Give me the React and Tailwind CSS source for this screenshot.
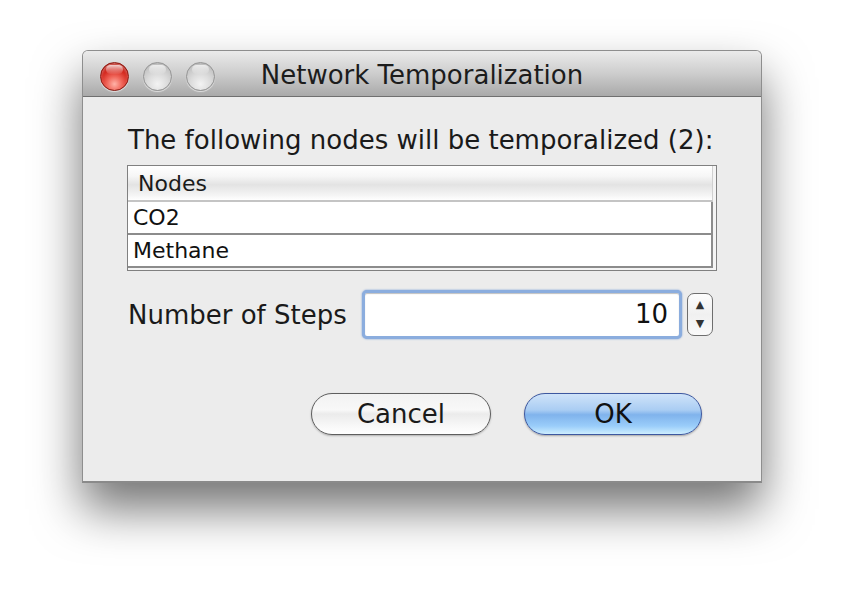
import React from "react";

const font = { fontFamily: '"DejaVu Sans", "Liberation Sans", sans-serif' };

function Light({ red }) {
  return (
    <div
      className={
        red
          ? "w-[29px] h-[29px] rounded-full border border-[#8c1a12] bg-[radial-gradient(circle_at_50%_78%,#ffb3a8_0%,#f0665a_30%,#d3261c_60%,#a01008_100%)] shadow-[inset_0_2px_3px_rgba(255,255,255,0.35),0_1px_1px_rgba(255,255,255,0.6)] flex justify-center"
          : "w-[29px] h-[29px] rounded-full border border-[#959595] bg-[radial-gradient(circle_at_50%_78%,#f3f3f3_0%,#dcdcdc_40%,#c3c3c3_75%,#a9a9a9_100%)] shadow-[0_1px_1px_rgba(255,255,255,0.6)] flex justify-center"
      }
    >
      <div
        className={
          red
            ? "mt-[2px] w-[17px] h-[9px] rounded-full bg-gradient-to-b from-[rgba(255,255,255,0.75)] to-[rgba(255,255,255,0.05)]"
            : "mt-[2px] w-[17px] h-[9px] rounded-full bg-gradient-to-b from-[rgba(255,255,255,0.7)] to-[rgba(255,255,255,0.05)]"
        }
      />
    </div>
  );
}

export default function App() {
  return (
    <div className="w-[843px] h-[597px] bg-white pt-[50px] pl-[82px]" style={font}>
      <div className="w-[680px] h-[433px] border border-[#8e8e8e] border-b-2 border-b-[#8a8a8a] rounded-t-[6px] bg-[#ececec] shadow-[0_26px_48px_rgba(0,0,0,0.55)] flex flex-col">
        {/* Title bar */}
        <div className="h-[46px] rounded-t-[5px] border-b border-[#6f6f6f] bg-gradient-to-b from-[#ebebeb] via-[#cdcdcd] to-[#a9a9a9] grid grid-cols-[1fr_auto_1fr] items-center">
          <div className="flex gap-[14px] pl-[17px] pt-[5px]">
            <Light red />
            <Light />
            <Light />
          </div>
          <div className="text-[26px] leading-[30px] text-[#1c1c1c] pt-[2px]">Network Temporalization</div>
          <div />
        </div>

        {/* Body */}
        <div className="flex flex-col pl-[44px] pr-[45px] pt-[28px]">
          <div className="text-[26px] leading-[30px] text-[#1a1a1a] pl-[1px]">
            The following nodes will be temporalized (2):
          </div>

          <div className="mt-[10px] w-[590px] h-[106px] border border-[#808080] bg-[#f4f4f4] flex flex-col pr-[3px] pb-[1px]">
            <div className="h-[36px] flex items-center pl-[10px] text-[22px] text-[#1a1a1a] border-b-2 border-[#c4c4c4] border-r border-r-[#d0d0d0] bg-[linear-gradient(to_bottom,#ffffff_0%,#f6f6f6_30%,#e3e3e3_55%,#f4f4f4_85%,#ffffff_100%)]">
              Nodes
            </div>
            <div className="h-[33px] flex items-center pl-[5px] text-[22px] text-[#111] bg-white border-b-2 border-r-2 border-[#8c8c8c]">
              CO2
            </div>
            <div className="h-[33px] flex items-center pl-[5px] text-[22px] text-[#111] bg-white border-b-2 border-r-2 border-[#8c8c8c]">
              Methane
            </div>
          </div>

          <div className="mt-[19px] h-[49px] flex items-center">
            <div className="w-[235px] text-[26px] leading-[30px] text-[#1a1a1a] pl-[1px]">Number of Steps</div>
            <div className="w-[320px] h-[49px] rounded-[5px] border-[3px] border-[#8badde] bg-white flex items-center justify-end pr-[11px] text-[26px] text-[#111] shadow-[inset_0_1px_1px_rgba(0,0,0,0.25),0_0_2px_#6d94d2]">
              10
            </div>
            <div className="ml-[5px] w-[26px] h-[43px] rounded-[7px] border border-[#6e6e6e] bg-gradient-to-b from-[#fdfdfd] via-[#f0f0f0] to-[#fafafa] flex flex-col items-center justify-between py-[5px] text-[11px] leading-[12px] text-[#333]">
              <span>▲</span>
              <span>▼</span>
            </div>
          </div>

          <div className="mt-[54px] flex justify-end gap-[33px] pr-[14px]">
            <div className="w-[180px] h-[42px] rounded-full border border-[#5e5e5e] bg-[linear-gradient(to_bottom,#f2f2f2_0%,#f8f8f8_40%,#ebebeb_50%,#f8f8f8_80%,#ffffff_100%)] shadow-[0_1px_2px_rgba(0,0,0,0.25)] flex items-center justify-center text-[26px] text-[#1a1a1a]">
              Cancel
            </div>
            <div className="w-[178px] h-[42px] rounded-full border border-[#3d58a0] bg-[linear-gradient(to_bottom,#cfe3f9_0%,#aacdf3_40%,#80b3ec_52%,#9acdfa_80%,#cdeeff_100%)] shadow-[0_1px_2px_rgba(0,0,0,0.3)] flex items-center justify-center text-[26px] text-[#111]">
              OK
            </div>
          </div>
        </div>
      </div>
    </div>
  );
}
